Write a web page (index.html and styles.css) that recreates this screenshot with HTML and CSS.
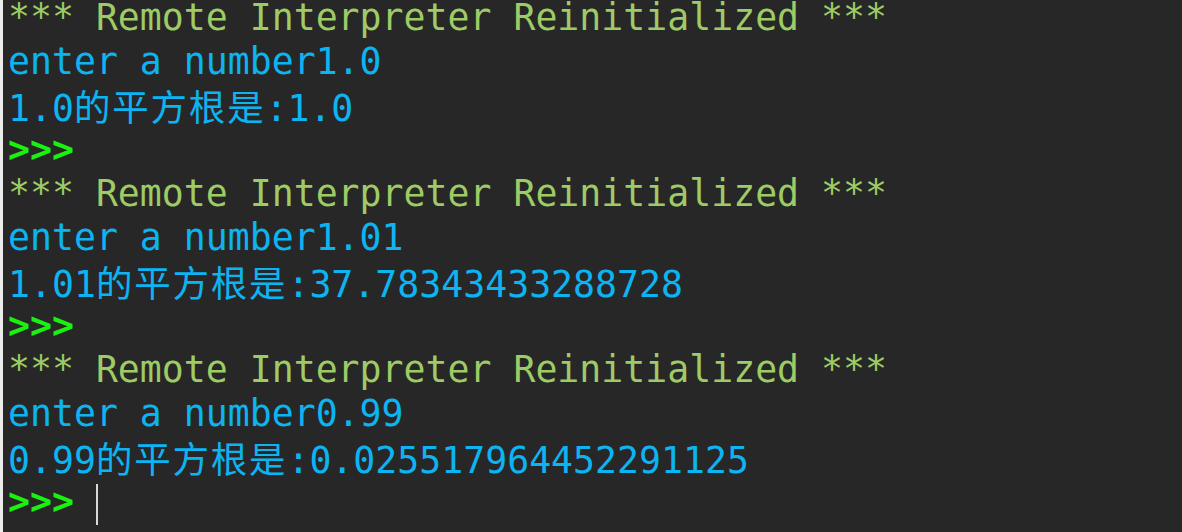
FILE: index.html
```html
<!DOCTYPE html>
<html>
<head>
<meta charset="utf-8">
<link rel="stylesheet" href="styles.css">
</head>
<body>
<div class="shell">
  <div class="line info">*** Remote Interpreter Reinitialized ***</div>
  <div class="line out">enter a number1.0</div>
  <div class="line out">1.0<span class="cjk">的平方根是</span>:1.0</div>
  <div class="line prompt">&gt;&gt;&gt;</div>
  <div class="line info">*** Remote Interpreter Reinitialized ***</div>
  <div class="line out">enter a number1.01</div>
  <div class="line out">1.01<span class="cjk">的平方根是</span>:37.78343433288728</div>
  <div class="line prompt">&gt;&gt;&gt;</div>
  <div class="line info">*** Remote Interpreter Reinitialized ***</div>
  <div class="line out">enter a number0.99</div>
  <div class="line out">0.99<span class="cjk">的平方根是</span>:0.025517964452291125</div>
  <div class="line prompt">&gt;&gt;&gt; <span class="cursor"></span></div>
</div>
</body>
</html>
```
FILE: styles.css
```css
html, body {
  margin: 0;
  padding: 0;
  background: #272727;
  height: 100%;
  overflow: hidden;
}
.shell {
  height: 100%;
  border-left: 3px solid #ececec;
  padding: 0 0 0 5px;
  box-sizing: border-box;
  font-family: "DejaVu Sans Mono", "Noto Sans CJK SC", monospace;
  font-size: 36.5px;
}
.line {
  white-space: pre;
  height: 44px;
  line-height: 36px;
}
.info { color: #9dcb65; }
.out { color: #0cb4f2; }
.prompt { color: #19f10e; font-weight: bold; }
.cjk {
  font-family: "Noto Sans CJK SC", sans-serif;
  letter-spacing: 1.8px;
  font-weight: normal;
}
.cursor {
  display: inline-block;
  width: 2px;
  height: 41px;
  background: #d8d8d8;
  vertical-align: -11px;
}
```
